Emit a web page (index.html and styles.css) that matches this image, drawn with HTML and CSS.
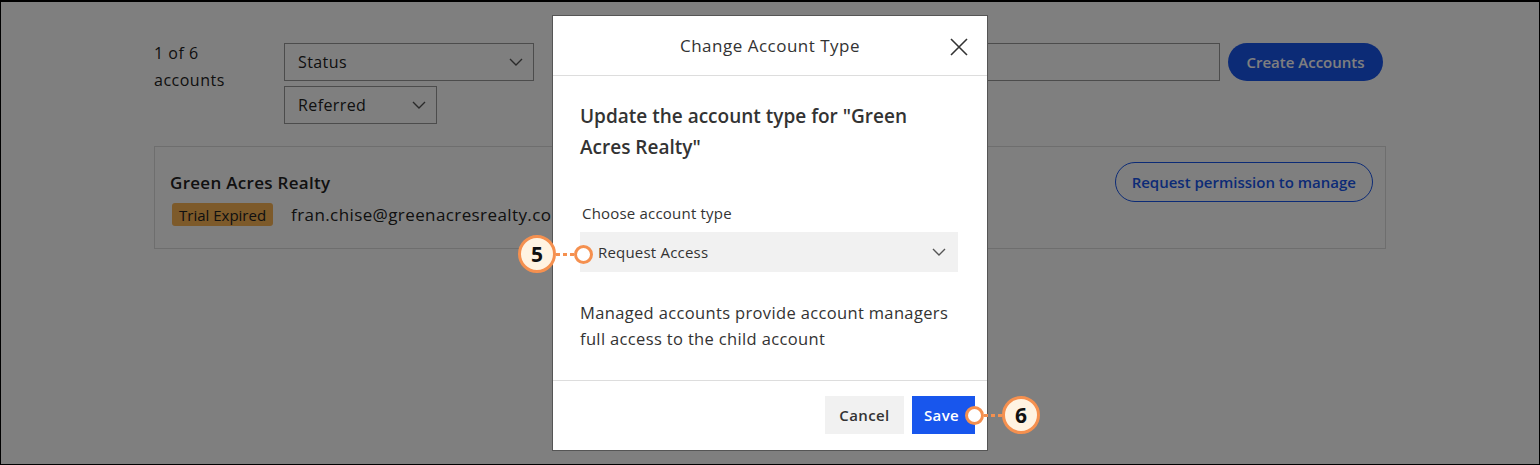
FILE: index.html
```html
<!DOCTYPE html>
<html lang="en">
<head>
  <meta charset="UTF-8">
  <meta name="viewport" content="width=device-width, initial-scale=1.0">
  <title>Accounts - Change Account Type</title>
  <link rel="stylesheet" href="styles.css">
</head>
<body>
  <div class="frame">
    <div class="page">
      <div class="toolbar">
        <div class="count">1 of 6<br>accounts</div>
        <div class="filters">
          <div class="select select-status">
            <span>Status</span>
            <svg class="chevron" viewBox="0 0 14 8"><path d="M1 1l6 6 6-6"/></svg>
          </div>
          <div class="select select-referred">
            <span>Referred</span>
            <svg class="chevron" viewBox="0 0 14 8"><path d="M1 1l6 6 6-6"/></svg>
          </div>
        </div>
        <div class="search">Search</div>
        <button class="create-btn">Create Accounts</button>
      </div>

      <div class="account-card">
        <div class="account-info">
          <div class="account-name">Green Acres Realty</div>
          <div class="account-meta">
            <span class="badge">Trial Expired</span>
            <span class="email">fran.chise@greenacresrealty.com</span>
          </div>
        </div>
        <button class="outline-btn">Request permission to manage</button>
      </div>
    </div>

    <div class="overlay"></div>

    <div class="modal">
      <div class="modal-header">
        <span class="modal-title">Change Account Type</span>
        <svg class="close" viewBox="0 0 18 18"><path d="M1 1l16 16M17 1L1 17"/></svg>
      </div>
      <div class="modal-body">
        <h2 class="modal-heading">Update the account type for "Green Acres Realty"</h2>
        <div class="field-label">Choose account type</div>
        <div class="field-select">
          <span>Request Access</span>
          <svg class="chevron" viewBox="0 0 14 8"><path d="M1 1l6 6 6-6"/></svg>
        </div>
        <p class="modal-desc">Managed accounts provide account managers full access to the child account</p>
      </div>
      <div class="modal-footer">
        <button class="btn btn-cancel">Cancel</button>
        <button class="btn btn-save">Save</button>
      </div>
    </div>

    <div class="callout callout-5">
      <span class="callout-num">5</span>
      <span class="callout-dots"></span>
      <span class="callout-dot"></span>
    </div>
    <div class="callout callout-6">
      <span class="callout-dot"></span>
      <span class="callout-dots"></span>
      <span class="callout-num">6</span>
    </div>
  </div>
</body>
</html>
```

FILE: styles.css
```css
* {
  margin: 0;
  padding: 0;
  box-sizing: border-box;
}

body {
  font-family: 'Open Sans', 'Noto Sans', Arial, sans-serif;
  color: #222;
  background: #000;
  letter-spacing: 0.4px;
}

button {
  font-family: inherit;
  letter-spacing: inherit;
  cursor: pointer;
}

.frame {
  position: relative;
  width: 1540px;
  height: 465px;
  border: 1px solid #000;
  border-top-width: 2px;
  background: #fff;
  overflow: hidden;
}

/* page behind the dialog */
.page {
  padding: 38px 0 0 153px;
  width: 1385px;
}

.toolbar {
  display: flex;
  align-items: flex-start;
}

.count {
  width: 130px;
  font-size: 16px;
  line-height: 27px;
  letter-spacing: 0.5px;
}

.filters {
  display: flex;
  flex-direction: column;
  gap: 5px;
  margin-top: 3px;
}

.select {
  height: 38px;
  border: 1px solid #999;
  display: flex;
  align-items: center;
  justify-content: space-between;
  padding: 0 10px 0 13px;
  font-size: 16px;
}

.select-status { width: 250px; }
.select-referred { width: 153px; }

.chevron {
  width: 14px;
  height: 8px;
  fill: none;
  stroke: #555;
  stroke-width: 1.4;
}

.search {
  margin-left: auto;
  margin-top: 3px;
  width: 330px;
  height: 38px;
  border: 1px solid #999;
  padding: 0 14px;
  display: flex;
  align-items: center;
  color: #b4b4b4;
  font-size: 17px;
}

.create-btn {
  margin-left: 8px;
  margin-right: 3px;
  margin-top: 3px;
  width: 155px;
  height: 38px;
  border: none;
  border-radius: 19px;
  background: #1856ed;
  color: #fff;
  font-size: 15px;
  font-weight: 600;
  letter-spacing: 0;
}

.account-card {
  margin-top: 22px;
  height: 103px;
  border: 1px solid #ddd;
  display: flex;
  justify-content: space-between;
  align-items: flex-start;
  padding: 15px 12px 0 15px;
}

.account-name {
  font-size: 17px;
  font-weight: 600;
  margin-top: 9px;
  letter-spacing: 0.3px;
}

.account-meta {
  display: flex;
  align-items: center;
  gap: 18px;
  margin-top: 9px;
}

.badge {
  background: #fab454;
  border-radius: 3px;
  padding: 2px 7px 1px;
  line-height: 20px;
  font-size: 15px;
  letter-spacing: 0;
  margin-left: 2px;
}

.email {
  font-size: 17px;
}

.outline-btn {
  height: 40px;
  padding: 0 16px;
  border: 1.5px solid #1856ed;
  border-radius: 20px;
  background: #fff;
  color: #1856ed;
  font-size: 15px;
  font-weight: 600;
  letter-spacing: 0;
}

.overlay {
  position: absolute;
  inset: 0;
  background: rgba(0, 0, 0, 0.5);
}

/* dialog */
.modal {
  position: absolute;
  left: 551px;
  top: 13px;
  width: 436px;
  height: 436px;
  background: #fff;
  border: 1px solid #555;
  display: flex;
  flex-direction: column;
}

.modal-header {
  position: relative;
  height: 60px;
  border-bottom: 1px solid #ddd;
  display: flex;
  align-items: center;
  justify-content: center;
}

.modal-title {
  font-size: 17px;
  font-weight: 500;
  color: #333;
  letter-spacing: 0.5px;
}

.close {
  position: absolute;
  right: 19px;
  top: 22px;
  width: 18px;
  height: 18px;
  stroke: #333;
  stroke-width: 1.6;
}

.modal-body {
  flex: 1;
  padding: 25px 29px 0 27px;
}

.modal-heading {
  font-size: 19px;
  font-weight: 600;
  line-height: 31px;
  color: #333;
  letter-spacing: 0;
}

.field-label {
  margin-top: 40px;
  padding-left: 2px;
  font-size: 15px;
  line-height: 20px;
  color: #333;
  letter-spacing: 0.2px;
}

.field-select {
  margin-top: 9px;
  height: 40px;
  background: #f1f1f1;
  display: flex;
  align-items: center;
  justify-content: space-between;
  padding: 0 12px 0 18px;
  font-size: 15px;
  color: #333;
  letter-spacing: 0.2px;
}

.modal-desc {
  margin-top: 28px;
  margin-right: -2px;
  font-size: 16.5px;
  line-height: 26px;
  color: #333;
  letter-spacing: 0.35px;
}

.modal-footer {
  height: 70px;
  border-top: 1px solid #ddd;
  display: flex;
  justify-content: flex-end;
  align-items: center;
  gap: 8px;
  padding: 0 12px 1px 0;
}

.btn {
  height: 38px;
  border: none;
  font-size: 15px;
  font-weight: 600;
  letter-spacing: 0.4px;
}

.btn-cancel {
  width: 79px;
  background: #f1f1f1;
  color: #333;
}

.btn-save {
  width: 63px;
  background: #1856ed;
  color: #fff;
  padding-right: 4px;
}

/* numbered step markers */
.callout {
  position: absolute;
  display: flex;
  align-items: center;
  letter-spacing: 0;
}

.callout-5 { left: 517px; top: 233px; }
.callout-6 { left: 964px; top: 394px; }

.callout-num {
  width: 38px;
  height: 38px;
  border-radius: 50%;
  border: 3px solid #f5904f;
  background: #fff3e2;
  display: flex;
  align-items: center;
  justify-content: center;
  font-size: 21px;
  font-weight: 700;
  color: #111;
}

.callout-dots {
  width: 18px;
  height: 3px;
  background: repeating-linear-gradient(to right, #f5904f 0 4px, transparent 4px 7px);
}

.callout-dot {
  width: 19px;
  height: 19px;
  border-radius: 50%;
  border: 3px solid #f5904f;
  background: #fff;
}
```
